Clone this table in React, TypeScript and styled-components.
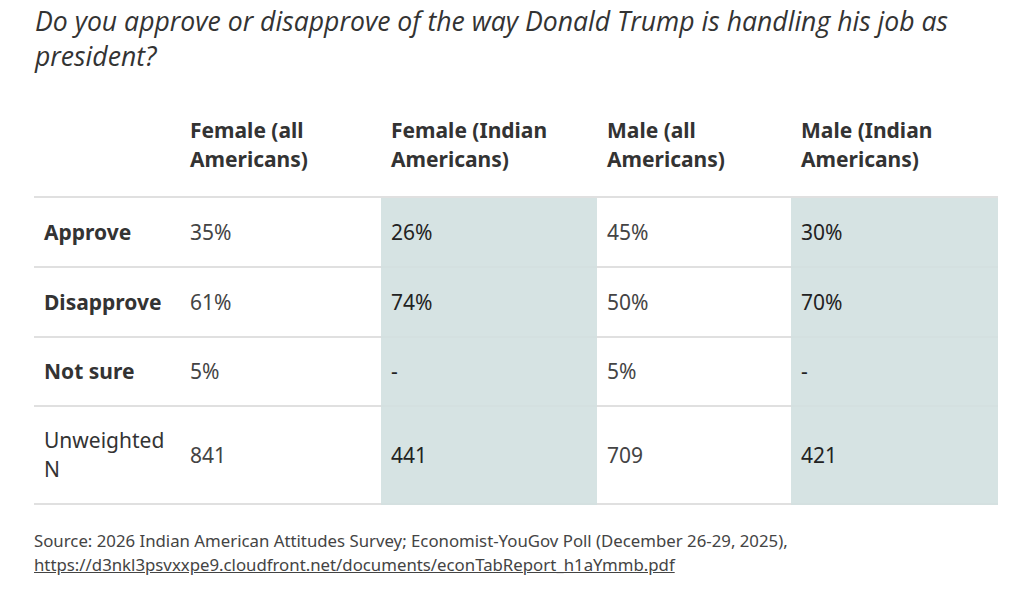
import React from "react";
import styled, { createGlobalStyle } from "styled-components";

const Global = createGlobalStyle`
  html, body { margin: 0; padding: 0; background: #fff; }
  body { font-family: "Noto Sans", "Open Sans", sans-serif; color: #333; }
`;

const Page = styled.div`
  padding: 4px 26px 0 34px;
  width: 964px;
`;

const Title = styled.h2`
  margin: 0 0 0 1px;
  font-family: "Open Sans", sans-serif;
  font-style: italic;
  font-weight: 400;
  font-size: 26.6px;
  line-height: 35px;
  color: #333;
`;

const Table = styled.table`
  margin-top: 29px;
  width: 964px;
  border-collapse: collapse;
  table-layout: fixed;
  font-size: 21px;
  color: #333;
`;

const Col = styled.col<{ $w: number }>`
  width: ${(p) => p.$w}px;
`;

const Th = styled.th`
  text-align: left;
  vertical-align: top;
  font-weight: 700;
  line-height: 29px;
  padding: 13px 10px 22px 10px;
  border-bottom: 2px solid #e0e0e0;
`;

const Td = styled.td<{ $shade?: boolean; $h: number }>`
  height: ${(p) => p.$h}px;
  padding: 0 10px;
  line-height: 29px;
  vertical-align: middle;
  background: ${(p) => (p.$shade ? "#d6e3e3" : "#fff")};
  border-bottom: 2px solid ${(p) => (p.$shade ? "#d4e0e0" : "#e0e0e0")};
  color: ${(p) => (p.$shade ? "#222" : "#444")};
`;

const Label = styled(Td)<{ $bold?: boolean }>`
  font-weight: ${(p) => (p.$bold ? 700 : 400)};
  color: #333;
`;

const Source = styled.p`
  margin: 24px 0 0 0;
  font-size: 16.8px;
  line-height: 24px;
  color: #444;
`;

const Link = styled.a`
  color: #444;
  text-decoration: underline;
`;

const widths = [146, 201, 216, 194, 207];

const cols = [
  "Female (all Americans)",
  "Female (Indian Americans)",
  "Male (all Americans)",
  "Male (Indian Americans)",
];

const rows: { label: string; bold: boolean; h: number; vals: string[] }[] = [
  { label: "Approve", bold: true, h: 68, vals: ["35%", "26%", "45%", "30%"] },
  { label: "Disapprove", bold: true, h: 68, vals: ["61%", "74%", "50%", "70%"] },
  { label: "Not sure", bold: true, h: 67, vals: ["5%", "-", "5%", "-"] },
  { label: "Unweighted N", bold: false, h: 96, vals: ["841", "441", "709", "421"] },
];

export default function App() {
  return (
    <>
      <Global />
      <Page>
        <Title>
          Do you approve or disapprove of the way Donald Trump is handling his job as president?
        </Title>
        <Table>
          <colgroup>
            {widths.map((w, i) => (
              <Col key={i} $w={w} />
            ))}
          </colgroup>
          <thead>
            <tr>
              <Th />
              {cols.map((c) => (
                <Th key={c}>{c}</Th>
              ))}
            </tr>
          </thead>
          <tbody>
            {rows.map((r) => (
              <tr key={r.label}>
                <Label $h={r.h} $bold={r.bold}>
                  {r.label}
                </Label>
                {r.vals.map((v, i) => (
                  <Td key={i} $h={r.h} $shade={i % 2 === 1}>
                    {v}
                  </Td>
                ))}
              </tr>
            ))}
          </tbody>
        </Table>
        <Source>
          Source: 2026 Indian American Attitudes Survey; Economist-YouGov Poll (December 26-29, 2025),{" "}
          <Link href="#">https://d3nkl3psvxxpe9.cloudfront.net/documents/econTabReport_h1aYmmb.pdf</Link>
        </Source>
      </Page>
    </>
  );
}
